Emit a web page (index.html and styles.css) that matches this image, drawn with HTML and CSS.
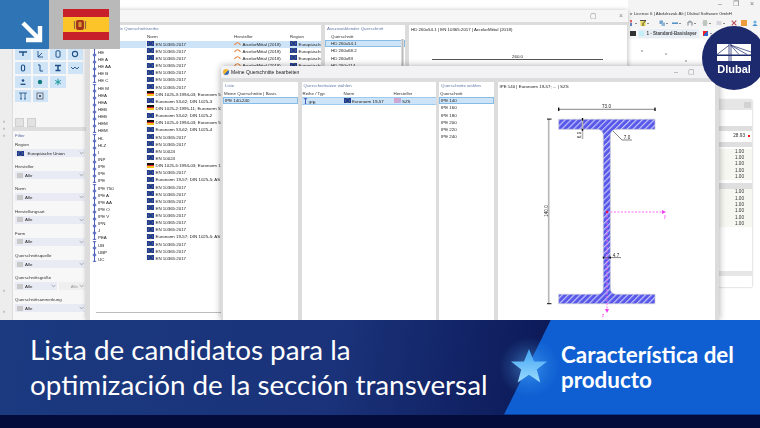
FILE: index.html
```html
<!DOCTYPE html>
<html lang="es">
<head>
<meta charset="utf-8">
<title>Lista de candidatos</title>
<link rel="stylesheet" href="styles.css">
</head>
<body>
<svg class="defs" width="0" height="0" aria-hidden="true">
  <defs>
    <symbol id="ib" viewBox="0 0 6 8"><path d="M1 .6H5M1 7.4H5M3 .6V7.4" fill="none" stroke="#2b45b0" stroke-width="1"/></symbol>
    <symbol id="chev" viewBox="0 0 6 4"><path d="M.8 .8 3 3 5.2 .8" fill="none" stroke="#777" stroke-width=".7"/></symbol>
    <symbol id="mfr" viewBox="0 0 7 5"><path d="M.5 4 C2 1 5 1 6.5 4" fill="none" stroke="#e8823c" stroke-width="1.2"/></symbol>
    <pattern id="hatch" width="4.2" height="4.2" patternUnits="userSpaceOnUse" patternTransform="rotate(45)">
      <rect width="4.2" height="4.2" fill="#5757ea"/>
      <rect width="1.2" height="4.2" fill="#c4c4fa"/>
    </pattern>
  </defs>
</svg>
<div class="page">
  <div class="desk">
    <div class="strip">
      <span class="tick t1">›</span><span class="tick">›</span><span class="tick">›</span>
      <span class="tick t2">›</span><span class="tick t3">›</span>
    </div>
    <div class="side">
      <section class="card tools">
        <div class="toolgrid">
          <button class="tb"><svg viewBox="0 0 10 8"><path d="M1 2H9M5 2V6" stroke="#1f4f86" stroke-width="1.4" fill="none"/></svg></button>
          <button class="tb"><svg viewBox="0 0 10 8"><path d="M3 1V7H8M3 7 7 3" stroke="#1f4f86" stroke-width=".9" fill="none"/></svg></button>
          <button class="tb"><svg viewBox="0 0 10 8"><rect x="3" y=".8" width="4" height="6.4" rx="1" stroke="#1f4f86" fill="none"/></svg></button>
          <button class="tb"><svg viewBox="0 0 10 8"><circle cx="5" cy="4" r="2.6" stroke="#1f4f86" stroke-width="1.1" fill="none"/></svg></button>
          <button class="tb"><svg viewBox="0 0 10 8"><rect x="3.4" y="1" width="3.2" height="6" rx="1.5" stroke="#1f4f86" stroke-width="1.1" fill="none"/></svg></button>
          <button class="tb"><svg viewBox="0 0 10 8"><path d="M3 1H5V7H8" stroke="#1f4f86" stroke-width="1" fill="none"/></svg></button>
          <button class="tb"><svg viewBox="0 0 10 8"><path d="M2 1.5H8M5 1.5V6M2.5 6.5H7.5" stroke="#1f4f86" stroke-width="1.5" fill="none"/></svg></button>
          <button class="tb"><svg viewBox="0 0 10 8"><path d="M1 3 3 5 5 3 7 5 9 3" stroke="#1f4f86" stroke-width=".9" fill="none"/></svg></button>
          <button class="tb"><svg viewBox="0 0 10 8"><circle cx="5" cy="2.5" r="1.3" fill="#1f4f86"/><path d="M2.5 6.3H7.5" stroke="#1f4f86" stroke-width="1.3"/></svg></button>
          <button class="tb"><svg viewBox="0 0 10 8"><circle cx="5" cy="4" r="2.2" fill="#137a80"/></svg></button>
          <button class="tb"><svg viewBox="0 0 10 8"><path d="M5 .8V7.2M2.2 2.4 7.8 5.6M7.8 2.4 2.2 5.6" stroke="#1b9aa0" stroke-width="1"/></svg></button>
          <span></span>
          <button class="tb"><svg viewBox="0 0 10 8"><path d="M1 1H9M3 1V7M7 1V7M2 7H4M6 7H8" stroke="#1f4f86" stroke-width=".8" fill="none"/></svg></button>
          <button class="tb"><svg viewBox="0 0 10 8"><rect x="2" y="1" width="6" height="6" stroke="#556" stroke-width=".8" fill="none"/><rect x="4" y="3" width="2" height="2" fill="#556"/></svg></button>
        </div>
        <div class="smalls"><span class="sm"></span><span class="sm"></span></div>
      </section>
      <section class="card filter">
        <h4 class="ft">Filter</h4>
        <div class="field"><label>Region</label><div class="sel"><i class="fl eu"></i><span>Europäische Union</span><svg class="cv"><use href="#chev"/></svg></div></div>
        <div class="field"><label>Hersteller</label><div class="sel"><i class="sw"></i><span>Alle</span><svg class="cv"><use href="#chev"/></svg></div></div>
        <div class="field"><label>Norm</label><div class="sel"><i class="sw"></i><span>Alle</span><svg class="cv"><use href="#chev"/></svg></div></div>
        <div class="field"><label>Herstellungsart</label><div class="sel"><i class="sw"></i><span>Alle</span><svg class="cv"><use href="#chev"/></svg></div></div>
        <div class="field"><label>Form</label><div class="sel"><i class="sw"></i><span>Alle</span><svg class="cv"><use href="#chev"/></svg></div></div>
        <div class="field"><label>Querschnittsquelle</label><div class="sel"><i class="sw"></i><span>Alle</span><svg class="cv"><use href="#chev"/></svg></div></div>
        <div class="field"><label>Querschnittsgröße</label>
          <div class="selpair">
            <div class="sel"><i class="sw"></i><span>Alle</span><svg class="cv"><use href="#chev"/></svg></div>
            <div class="sel off"><span>Alle</span><svg class="cv"><use href="#chev"/></svg></div>
          </div>
        </div>
        <div class="field"><label>Querschnittsanmerkung</label><div class="sel"><i class="sw"></i><span>Alle</span><svg class="cv"><use href="#chev"/></svg></div></div>
      </section>
    </div>

    <div class="appchrome">
      <div class="wc"><span>–</span><span>❐</span><span>×</span></div>
      <div class="apptitle">e License 6 | Abdulrzzak Ali | Dlubal Software GmbH</div>
      <div class="apptools">
        <span class="ag g1"><svg viewBox="0 0 6 6"><path d="M3 0V2.6" stroke="#d22" stroke-width="1.4"/><path d="M3 3V6" stroke="#25b" stroke-width="1.4"/></svg><i class="dd"></i></span>
        <span class="ag g2"><svg viewBox="0 0 6 6"><rect x=".5" y="1" width="5" height="5" fill="#e6d65a"/><path d="M0 .5H6L3 3.5V6" stroke="#222" stroke-width=".8" fill="none"/></svg><i class="dd"></i></span>
        <span class="ag g3"><svg viewBox="0 0 6 6"><rect x=".5" y=".5" width="3.5" height="3.5" fill="#6f9fca"/><rect x="2.5" y="2.5" width="3.5" height="3.5" fill="#8fb6d8"/></svg><i class="dd"></i></span>
        <span class="ag g4"><svg viewBox="0 0 6 6"><path d="M0 3.2H6" stroke="#4f8fc6" stroke-width="1.5"/></svg><i class="dd"></i></span>
        <span class="ag g5"><svg viewBox="0 0 6 6"><path d="M1 5.5V2H5V5.5M3 .5V2" stroke="#77808c" stroke-width="1" fill="none"/></svg><i class="dd"></i></span>
        <span class="ag g6"><svg viewBox="0 0 6 6"><path d="M1 1H5M.5 3H5.5M1 5H5" stroke="#8c978c" stroke-width="1"/></svg><i class="dd"></i></span>
        <span class="ag g7"><svg viewBox="0 0 6 6"><rect x=".5" y="1" width="5" height="4" fill="#d4d8dc"/></svg><i class="dd"></i></span>
        <span class="ag g8"><svg viewBox="0 0 6 6"><path d="M.7 .7 5.3 5.3M5.3 .7 .7 5.3" stroke="#b8565e" stroke-width="1.2"/></svg></span>
        <span class="ag g9"><svg viewBox="0 0 6 6"><rect width="6" height="6" fill="#ef9c3f"/></svg></span>
        <span class="ag g10"><svg viewBox="0 0 6 6"><circle cx="3" cy="2" r="1.6" fill="#6eb2e2"/><path d="M.5 6C1 3.6 5 3.6 5.5 6Z" fill="#4b93cc"/></svg></span>
      </div>
      <div class="applayer"><i class="lk"></i><div class="layer"><i class="lsw"></i><span>1 - Standard-Basislayer</span><svg class="cv lc"><use href="#chev"/></svg></div><i class="redflag"></i><i class="dd"></i></div>
    </div>

    <div class="sidepanel">
      <div class="sp-head"><i class="sp-x"></i></div>
      <div class="sp-gap a"></div>
      <div class="sp-bar"></div>
      <div class="sp-val first"><span>28.93</span><i class="dot"></i></div>
      <div class="sp-bar b2"></div>
      <div class="sp-val">1.00</div><div class="sp-val">1.00</div><div class="sp-val">1.00</div><div class="sp-val">1.00</div><div class="sp-val">1.00</div>
      <div class="sp-bar b3"></div>
      <div class="sp-val">1.00</div><div class="sp-val">1.00</div><div class="sp-val">1.00</div><div class="sp-val">1.00</div><div class="sp-val">1.00</div><div class="sp-val">1.00</div>
      <div class="sp-foot"></div>
    </div>

    <div class="win w1">
      <div class="tbar"><span class="ctl">▢</span><span class="ctl">×</span></div>
      <div class="panes p1">
        <div class="pane list">
          <div class="ph">Auszuwählende Querschnittsreihe</div>
          <div class="chead"><span class="c1"></span><span class="c2">Norm</span><span class="c3">Hersteller</span><span class="c4">Region</span></div>
          <div class="rows">
            <div class="r on"><span class="c1"><svg class="ib"><use href="#ib"/></svg>HD</span><span class="c2"><i class="fl eu"></i>EN 10365:2017</span><span class="c3"><svg class="mf"><use href="#mfr"/></svg>ArcelorMittal (2018)</span><span class="c4"><i class="fl eu"></i>Europäische Union</span></div>
            <div class="r"><span class="c1"><svg class="ib"><use href="#ib"/></svg>HE</span><span class="c2"><i class="fl eu"></i>EN 10365:2017</span><span class="c3"><svg class="mf"><use href="#mfr"/></svg>ArcelorMittal (2018)</span><span class="c4"><i class="fl eu"></i>Europäische Union</span></div>
            <div class="r"><span class="c1"><svg class="ib"><use href="#ib"/></svg>HE A</span><span class="c2"><i class="fl eu"></i>EN 10365:2017</span><span class="c3"><svg class="mf"><use href="#mfr"/></svg>ArcelorMittal (2018)</span><span class="c4"><i class="fl eu"></i>Europäische Union</span></div>
            <div class="r"><span class="c1"><svg class="ib"><use href="#ib"/></svg>HE AA</span><span class="c2"><i class="fl eu"></i>EN 10365:2017</span><span class="c3"><svg class="mf"><use href="#mfr"/></svg>ArcelorMittal (2018)</span><span class="c4"><i class="fl eu"></i>Europäische Union</span></div>
            <div class="r"><span class="c1"><svg class="ib"><use href="#ib"/></svg>HE B</span><span class="c2"><i class="fl eu"></i>EN 10365:2017</span></div>
            <div class="r"><span class="c1"><svg class="ib"><use href="#ib"/></svg>HE C</span><span class="c2"><i class="fl eu"></i>EN 10365:2017</span></div>
            <div class="r"><span class="c1"><svg class="ib"><use href="#ib"/></svg>HE M</span><span class="c2"><i class="fl eu"></i>EN 10365:2017</span></div>
            <div class="r"><span class="c1"><svg class="ib"><use href="#ib"/></svg>HEA</span><span class="c2"><i class="fl de"></i>DIN 1025-3:1994-03; Euronorm 53-62</span></div>
            <div class="r"><span class="c1"><svg class="ib"><use href="#ib"/></svg>HEA</span><span class="c2"><i class="fl eu"></i>Euronorm 53-62; DIN 1025-3</span></div>
            <div class="r"><span class="c1"><svg class="ib"><use href="#ib"/></svg>HEB</span><span class="c2"><i class="fl de"></i>DIN 1025-2:1995-11; Euronorm 53-62</span></div>
            <div class="r"><span class="c1"><svg class="ib"><use href="#ib"/></svg>HEB</span><span class="c2"><i class="fl eu"></i>Euronorm 53-62; DIN 1025-2</span></div>
            <div class="r"><span class="c1"><svg class="ib"><use href="#ib"/></svg>HEM</span><span class="c2"><i class="fl de"></i>DIN 1025-4:1994-03; Euronorm 53-62</span></div>
            <div class="r"><span class="c1"><svg class="ib"><use href="#ib"/></svg>HEM</span><span class="c2"><i class="fl eu"></i>Euronorm 53-62; DIN 1025-4</span></div>
            <div class="r"><span class="c1"><svg class="ib"><use href="#ib"/></svg>HL</span><span class="c2"><i class="fl eu"></i>EN 10365:2017</span></div>
            <div class="r"><span class="c1"><svg class="ib"><use href="#ib"/></svg>HLZ</span><span class="c2"><i class="fl eu"></i>EN 10365:2017</span></div>
            <div class="r"><span class="c1"><svg class="ib"><use href="#ib"/></svg>I</span><span class="c2"><i class="fl eu"></i>EN 10024</span></div>
            <div class="r"><span class="c1"><svg class="ib"><use href="#ib"/></svg>INP</span><span class="c2"><i class="fl eu"></i>EN 10024</span></div>
            <div class="r"><span class="c1"><svg class="ib"><use href="#ib"/></svg>IPE</span><span class="c2"><i class="fl de"></i>DIN 1025-5:1994-03; Euronorm 19-57</span></div>
            <div class="r"><span class="c1"><svg class="ib"><use href="#ib"/></svg>IPE</span><span class="c2"><i class="fl eu"></i>EN 10365:2017</span></div>
            <div class="r"><span class="c1"><svg class="ib"><use href="#ib"/></svg>IPE</span><span class="c2"><i class="fl eu"></i>Euronorm 19-57; DIN 1025-5; AS</span></div>
            <div class="r"><span class="c1"><svg class="ib"><use href="#ib"/></svg>IPE 750</span><span class="c2"><i class="fl eu"></i>EN 10365:2017</span></div>
            <div class="r"><span class="c1"><svg class="ib"><use href="#ib"/></svg>IPE A</span><span class="c2"><i class="fl eu"></i>EN 10365:2017</span></div>
            <div class="r"><span class="c1"><svg class="ib"><use href="#ib"/></svg>IPE AA</span><span class="c2"><i class="fl eu"></i>EN 10365:2017</span></div>
            <div class="r"><span class="c1"><svg class="ib"><use href="#ib"/></svg>IPE O</span><span class="c2"><i class="fl eu"></i>EN 10365:2017</span></div>
            <div class="r"><span class="c1"><svg class="ib"><use href="#ib"/></svg>IPE V</span><span class="c2"><i class="fl eu"></i>EN 10365:2017</span></div>
            <div class="r"><span class="c1"><svg class="ib"><use href="#ib"/></svg>IPN</span><span class="c2"><i class="fl eu"></i>EN 10365:2017</span></div>
            <div class="r"><span class="c1"><svg class="ib"><use href="#ib"/></svg>J</span><span class="c2"><i class="fl eu"></i>EN 10365:2017</span></div>
            <div class="r"><span class="c1"><svg class="ib"><use href="#ib"/></svg>PEA</span><span class="c2"><i class="fl eu"></i>Euronorm 19-57; DIN 1025-5; AS</span></div>
            <div class="r"><span class="c1"><svg class="ib"><use href="#ib"/></svg>UB</span><span class="c2"><i class="fl eu"></i>EN 10365:2017</span></div>
            <div class="r"><span class="c1"><svg class="ib"><use href="#ib"/></svg>UBP</span><span class="c2"><i class="fl eu"></i>EN 10365:2017</span></div>
            <div class="r"><span class="c1"><svg class="ib"><use href="#ib"/></svg>UC</span><span class="c2"><i class="fl eu"></i>EN 10365:2017</span></div>
          </div>
          <div class="hscroll"></div>
        </div>
        <div class="pane pick">
          <div class="ph">Auszuwählender Querschnitt</div>
          <div class="chead q"><span>Querschnitt</span></div>
          <div class="plain on">HD 260x54.1</div>
          <div class="plain">HD 260x68.2</div>
          <div class="plain">HD 260x93</div>
          <div class="plain">HD 260x114</div>
          <div class="vscroll"></div>
        </div>
        <div class="pane prev">
          <div class="pt">HD 260x54.1 | EN 10365:2017 | ArcelorMittal (2018)</div>
          <div class="dimtop"><span>260.0</span></div>
        </div>
      </div>
    </div>

    <div class="win w2">
      <div class="tbar t2"><i class="appico"></i><span class="wt">Meine Querschnitte bearbeiten</span><span class="ctl m">–</span><span class="ctl">▢</span></div>
      <div class="panes p2">
        <div class="pane a">
          <div class="ph">Liste</div>
          <div class="chead s"><span>Meine Querschnitte | Basis</span></div>
          <div class="plain on">IPE 140-240</div>
        </div>
        <div class="pane b">
          <div class="ph">Querschnittsätze wählen</div>
          <div class="chead s tri"><span>Reihe / Typ</span><span>Norm</span><span>Hersteller</span></div>
          <div class="r tri on"><span><svg class="ib"><use href="#ib"/></svg>IPE</span><span><i class="fl eu"></i>Euronorm 19-57</span><span><i class="fl mk"></i>SZS</span></div>
        </div>
        <div class="pane c">
          <div class="ph">Querschnitte wählen</div>
          <div class="chead s"><span>Querschnitt</span></div>
          <div class="plain on">IPE 140</div>
          <div class="plain">IPE 160</div>
          <div class="plain">IPE 180</div>
          <div class="plain">IPE 200</div>
          <div class="plain">IPE 220</div>
          <div class="plain">IPE 240</div>
        </div>
        <div class="pane d">
          <div class="pt">IPE 140 | Euronorm 19-57; ... | SZS</div>
          <svg class="draw" viewBox="497 82 218 238" width="218" height="238">
            <path class="beam" d="M557.7 119.3H654V129.3H616Q609.3 129.3 609.3 136V288Q609.3 294.3 616 294.3H654V303.7H557.7V294.3H596Q602.3 294.3 602.3 288V136Q602.3 129.3 596 129.3H557.7Z"/>
            <path class="thick" d="M547.7 119V304M581.5 119V139"/>
            <g class="dim">
              <path d="M557.7 109.3H654"/>
              <path d="M612 131 621 140H631M602 257.6H620"/>
            </g>
            <g class="nub">
              <rect x="557" y="107.6" width="1.4" height="3.4"/><rect x="653.3" y="107.6" width="1.4" height="3.4"/>
              <rect x="546" y="118.6" width="4.5" height="1"/><rect x="546" y="303.2" width="4.5" height="1"/>
              <rect x="580.8" y="118" width="1.4" height="2.6"/><rect x="580.8" y="128.8" width="1.4" height="2"/>
              <rect x="601.8" y="256.6" width="1.4" height="2"/><rect x="608.6" y="256.6" width="1.4" height="2"/>
            </g>
            <text x="605.5" y="108" class="lb" text-anchor="middle">73.0</text>
            <text x="626" y="139.2" class="lb" text-anchor="middle">7.0</text>
            <text x="615" y="256.6" class="lb" text-anchor="middle">4.7</text>
            <text x="0" y="0" class="lb" text-anchor="middle" transform="translate(580 135) rotate(-90)">6.9</text>
            <text x="0" y="0" class="lb" text-anchor="middle" transform="translate(546.5 211) rotate(-90)">140.0</text>
            <path class="axis" d="M606 212H662M606 212V310"/>
            <path class="axh" d="M661 210 665 212 661 214ZM604 309H608L606 313Z"/>
            <circle cx="606" cy="212" r="1.2" fill="#e3164a"/>
            <text x="664" y="217.5" class="ax" text-anchor="middle">y</text>
            <text x="602" y="317" class="ax" text-anchor="middle">z</text>
          </svg>
        </div>
      </div>
    </div>

    <div class="badge">
      <div class="b-arrow"><svg viewBox="0 0 49 49" width="49" height="49"><path d="M23 23 39 39M40 26V40H26" fill="none" stroke="#fff" stroke-width="4.4"/></svg></div>
      <div class="b-flag"><div class="es"><svg viewBox="0 0 14 14" class="crest"><rect x="3" y="2" width="8" height="10" rx="2" fill="#a5341f"/><rect x="5.5" y="4" width="3" height="5" fill="#d99a2b"/><path d="M1.5 3V11M12.5 3V11" stroke="#8c6c40" stroke-width="1.2"/></svg></div></div>
    </div>

    <div class="dlubal">
      <svg viewBox="0 0 34 17" width="34" height="17"><rect width="34" height="17" fill="#fff"/><path d="M0 11.2H34" stroke="#1e2a6e" stroke-width="1.4"/><path d="M12 0V17M14 0V17" stroke="#1e2a6e" stroke-width=".8"/><path d="M12.5 1 0 10.5M13.5 1 34 8M13.5 1 30 10.5M13.5 1 22 10.5" stroke="#1e2a6e" stroke-width=".7" fill="none"/></svg>
      <span>Dlubal</span>
    </div>
  </div>

  <div class="banner">
    <div class="bleft"><h1>Lista de candidatos para la<br>optimización de la sección transversal</h1></div>
    <div class="bright"><h2>Característica del<br>producto</h2></div>
    <svg class="star" viewBox="-30 -30 60 60" width="60" height="60"><defs><radialGradient id="gl"><stop offset="0" stop-color="#57b6ff" stop-opacity=".5"/><stop offset=".7" stop-color="#57b6ff" stop-opacity=".12"/><stop offset="1" stop-color="#57b6ff" stop-opacity="0"/></radialGradient><linearGradient id="st" x1="0" y1="0" x2="0" y2="1"><stop offset="0" stop-color="#3fa2f2"/><stop offset="1" stop-color="#9bdcff"/></linearGradient></defs><circle r="30" fill="url(#gl)"/><path d="M0-18 5-5.6 18-5.6 7.8 2.4 11.3 15.5 0 7.8-11.3 15.5-7.8 2.4-18-5.6-5-5.6Z" fill="url(#st)"/></svg>
  </div>
  <div class="foot"></div>
</div>
</body>
</html>
```

FILE: styles.css
```css
* { box-sizing: border-box; }
html, body { margin: 0; padding: 0; }
body { width: 760px; height: 428px; overflow: hidden; background: #fff; font-family: "Liberation Sans", Arial, sans-serif; }
.defs { position: absolute; }
.page { display: flex; flex-direction: column; width: 760px; height: 428px; overflow: hidden; }

/* Desktop */
.desk { position: relative; display: flex; flex: none; height: 319.5px; overflow: hidden; background: #fff; font-size: 4.4px; line-height: 7px; color: #222; filter: blur(.3px); }
.strip { position: relative; display: flex; flex-direction: column; width: 13px; padding-top: 118px; background: #ededed; color: #777; border-right: 1px solid #ddd; }
.tick { display: block; height: 7px; padding-left: 3px; font-size: 6px; line-height: 7px; }
.tick.t2 { margin-top: 148px; }
.tick.t3 { margin-top: 14px; }
.side { display: flex; flex-direction: column; gap: 4px; width: 75px; padding-top: 36px; background: #dedede; padding-right: 1px; }
.card { background: #fff; }
.tools { height: 91px; padding: 12px 0 0 2px; background: #f6f6f6; }
.toolgrid { display: grid; grid-template-columns: repeat(4, 15.5px); grid-auto-rows: 12px; gap: 2px; }
.tb { display: flex; align-items: center; justify-content: center; padding: 0; border: 0; background: #cfe4f6; }
.tb svg { width: 10px; height: 8px; }
.smalls { display: flex; gap: 3px; margin-top: 16px; }
.sm { width: 9px; height: 9px; background: #e2e2e2; border: 1px solid #cfcfcf; }
.filter { flex: 1; padding: .5px 2px 0; background: #f7f7f7; }
.ft { margin: 0 0 1.6px; font-size: 4.4px; line-height: 8px; font-weight: 400; color: #5a6ea8; }
.field { margin-bottom: 6.2px; }
.field label { display: block; height: 8px; line-height: 8px; color: #333; }
.sel { display: flex; align-items: center; gap: 2px; height: 8px; padding-left: 2px; background: #e8ebf4; position: relative; color: #222; }
.selpair { display: flex; gap: 2px; }
.selpair .sel { flex: 0 0 42px; }
.selpair .sel.off { flex: 1; justify-content: flex-end; padding-right: 7px; background: #efefef; color: #999; }
.sw { width: 6px; height: 5px; background: #c9c9c9; }
.cv { position: absolute; right: 1.5px; top: 2px; width: 5px; height: 4px; }

/* Flags */
.fl { display: inline-block; flex: none; width: 7px; height: 5px; margin-right: 1.5px; vertical-align: -0.5px; }
.eu { background: radial-gradient(circle, #1e3a94 32%, #6d7a6a 42%, #1e3a94 58%); }
.de { background: linear-gradient(#111 0 33%, #d8242a 33% 66%, #f4c320 66%); }
.mk { background: linear-gradient(135deg, #e0a0c0, #b9b0e6); }

/* Windows */
.win { position: absolute; display: flex; flex-direction: column; background: #dcdcdc; }
.w1 { left: 86px; top: 10px; width: 542px; height: 310px; border-radius: 3px 3px 0 0; box-shadow: 0 0 4px rgba(0,0,0,.25); }
.w2 { left: 221px; top: 66px; width: 498px; height: 254px; border-radius: 3px 3px 0 0; box-shadow: 0 0 7px rgba(0,0,0,.35); }
.tbar { display: flex; justify-content: flex-end; align-items: center; gap: 12px; flex: none; height: 12px; padding-right: 5px; background: #f6f6f6; color: #888; font-size: 7px; }
.tbar.t2 { justify-content: flex-start; padding-left: 2px; padding-right: 24px; gap: 0; background: #f2f2f4; }
.ctl { line-height: 12px; margin-left: 10px; }
.ctl.m { margin-left: auto; }
.appico { width: 6px; height: 6px; margin-right: 2px; border-radius: 50%; background: linear-gradient(135deg, #f0b630 50%, #3a6ab0 50%); }
.wt { font-size: 5px; color: #222; }
.panes { display: flex; flex: 1; min-height: 0; }
.p1 { gap: 4px; padding: 3px 1px 0 4px; }
.p2 { gap: 3.5px; padding: 4px 4px 0 2px; }
.pane { position: relative; background: #fff; overflow: hidden; }
.list { width: 231px; }
.pick { width: 80px; }
.prev { flex: 1; }
.w2 .a { width: 75px; }
.w2 .b { width: 134px; }
.w2 .c { width: 55px; }
.w2 .d { flex: 1; }
.ph { padding-left: 2px; height: 8px; line-height: 8px; color: #6478a8; white-space: nowrap; }
.pt { padding: 1px 2px; height: 8px; line-height: 7px; white-space: nowrap; }
.chead { display: flex; height: 7px; line-height: 7px; color: #333; }
.list .chead, .list .r { display: grid; grid-template-columns: 57px 87px 56px 31px; }
.chead.q { padding-left: 6px; }
.chead.s { padding-left: 1px; }
.rows { display: flex; flex-direction: column; margin-top: .7px; }
.r { height: 7.15px; line-height: 7.15px; white-space: nowrap; overflow: hidden; }
.r span { overflow: hidden; display: block; }
.r.on { background: #cde4f8; }
.r .c1 { border-right: 1px solid #f1f1f1; padding-left: 2px; }
.ib { display: inline-block; width: 5px; height: 7px; margin-right: 1px; vertical-align: -1.5px; }
.mf { display: inline-block; width: 7px; height: 5px; margin-right: 1.5px; }
.plain { height: 7.3px; line-height: 7.3px; padding-left: 2px; white-space: nowrap; }
.pick .plain { padding-left: 6px; }
.plain.on { background: #cde4f8; outline: 1px solid #86bce8; outline-offset: -1px; }
.chead.tri, .r.tri { display: grid; grid-template-columns: 41px 50px 43px; padding-left: 1px; }
.r.tri { height: 8px; line-height: 6.5px; background: #cde4f8; border: 1px solid #9ecaee; border-width: 1px 0; }
.hscroll { position: absolute; left: 6px; right: 0; bottom: 7px; height: 1.4px; background: #bdbdbd; }
.vscroll { position: absolute; right: 1px; top: 14px; bottom: 0; width: 3px; background: linear-gradient(90deg, #f0f0f0, #bbb 40%, #bbb 60%, #f0f0f0); }
.dimtop { position: relative; margin: 26px 24px 0 23px; height: 1px; border-top: 1.4px solid #555; text-align: center; }
.dimtop span { position: absolute; left: 0; right: 0; top: -7.5px; }
.draw { position: absolute; left: 0; top: 0; display: block; }
.beam { fill: url(#hatch); stroke: #c2c2d4; stroke-width: .7; }
.dim path { stroke: #333; stroke-width: .6; fill: none; }
.thick { stroke: #b6b6b6; stroke-width: 1.6; fill: none; }
.nub rect { fill: #111; }
.lb { font-family: "Liberation Sans", Arial, sans-serif; font-size: 4.6px; fill: #222; }
.ax { font-family: "Liberation Sans", Arial, sans-serif; font-size: 5px; fill: #f13cf0; }
.axis { stroke: #f56af2; stroke-width: 1; stroke-dasharray: 2 1.5; fill: none; }
.axh { fill: #f13cf0; }

/* App chrome */
.appchrome { position: absolute; left: 628px; top: 0; right: 0; height: 100px; color: #555; background:
  radial-gradient(circle at 14px 51px, #aaa .6px, transparent 1px),
  radial-gradient(circle at 38px 54px, #aaa .6px, transparent 1px),
  radial-gradient(circle at 58px 61px, #aaa .6px, transparent 1px),
  #fff; }
.wc { display: flex; justify-content: flex-end; gap: 11px; height: 9px; padding-right: 6px; background: #f4f4f4; font-size: 7px; line-height: 8px; color: #777; }
.apptitle { height: 9px; padding: 1px 0 0 2px; white-space: nowrap; line-height: 7px; background: #f4f4f4; color: #333; font-size: 4.4px; }
.apptools { display: flex; align-items: center; height: 10px; background: #f4f4f4; }
.ag { display: flex; align-items: center; gap: 1px; flex: none; }
.ag svg { width: 6px; height: 6px; flex: none; }
.dd { width: 0; height: 0; flex: none; border: 1.2px solid transparent; border-top: 1.6px solid #222; border-bottom: 0; }
.g2 { margin-left: 3px; }
.g3 { margin-left: 10px; }
.g4 { margin-left: 4px; }
.g5 { margin-left: 6px; }
.g6 { margin-left: 6px; }
.g7 { margin-left: 5px; }
.g8 { margin-left: 6px; }
.g9 { margin-left: 4px; }
.g10 { margin-left: 5px; }
.applayer { display: flex; align-items: center; gap: 1.5px; height: 11px; padding-left: 2px; background: #f7f7f7; }
.lk { width: 6px; height: 5px; background: #333; }
.layer { position: relative; display: flex; align-items: center; gap: 3px; width: 61px; height: 9px; background: #e8eef5; font-size: 4.5px; font-weight: 700; color: #444; white-space: nowrap; }
.lsw { width: 5px; height: 5px; background: #c4eef8; margin-left: 1px; flex: none; }
.lc { top: 2.5px; }
.redflag { width: 5px; height: 5px; margin-left: 3px; background: linear-gradient(135deg, #e22 50%, #36c 50%); }

/* Right-hand panel */
.sidepanel { position: absolute; left: 718px; top: 100px; width: 34px; height: 187px; display: flex; flex-direction: column; align-items: stretch; background: #fff; box-shadow: 0 0 2px rgba(0,0,0,.3); color: #333; font-size: 4.7px; }
.sp-head { height: 10px; background: #e6e6e6; position: relative; }
.sp-x { position: absolute; right: 1px; top: 2px; width: 7px; height: 6px; background: #d2d2d2; }
.sp-gap.a { height: 16px; }
.sp-bar { height: 5px; background: #dfdfdf; }
.sp-bar.b2 { margin-top: 2px; margin-bottom: 1.5px; }
.sp-bar.b3 { margin-top: 3px; height: 6px; margin-bottom: 0; }
.sp-val { display: flex; justify-content: flex-end; height: 6.35px; line-height: 6.35px; padding-right: 8px; background: #f6f7f1; }
.sp-val.first { height: 9px; line-height: 9px; padding-right: 1px; align-items: center; background: #fff; }
.dot { width: 2px; height: 2px; margin-left: 3px; margin-right: 1px; background: #e11; }
.sp-foot { height: 5px; margin-top: auto; margin-bottom: 11px; background: #e6e6e6; }

/* Overlays */
.badge { position: absolute; left: 0; top: 0; display: flex; width: 120px; height: 49px; }
.b-arrow { width: 49px; height: 49px; background: #2f75b5; }
.b-arrow svg { display: block; }
.b-flag { display: flex; align-items: center; justify-content: center; width: 71px; background: #b9b9b9; padding-left: 2px; }
.es { display: flex; align-items: center; padding-left: 10px; width: 46px; height: 31px; background: linear-gradient(#c8202a 0 25%, #fdc42a 25% 75%, #c8202a 75%); }
.crest { width: 14px; height: 14px; }
.dlubal { position: absolute; left: 702px; top: 26px; display: flex; flex-direction: column; align-items: center; width: 64px; height: 64px; padding: 18px 0 0 0; border-radius: 50%; background: #1e2a6e; color: #fff; font-size: 11px; font-weight: 700; line-height: 14px; }
.dlubal svg { display: block; flex: none; margin-bottom: 1px; }

/* Banner */
.banner { position: relative; display: flex; flex: none; height: 95px; background: linear-gradient(100deg, #1b3a80 0%, #1a3279 45%, #0c1958 72%); color: #fff; }
.bleft { display: flex; align-items: center; flex: 1; padding-left: 30px; }
h1 { margin: 0; font-family: Lato, "Open Sans", sans-serif; font-size: 27.8px; font-weight: 400; line-height: 35px; white-space: nowrap; }
.bright { display: flex; align-items: center; width: 256px; padding-left: 57px; background: #0f5fd2; clip-path: polygon(47px 0, 100% 0, 100% 100%, 0 100%); }
h2 { margin: 0; font-family: Lato, "Open Sans", sans-serif; font-size: 22.4px; font-weight: 700; line-height: 25px; white-space: nowrap; }
.star { position: absolute; left: 499px; top: 17px; }
.foot { flex: 1; background: #040c3c; }
```
